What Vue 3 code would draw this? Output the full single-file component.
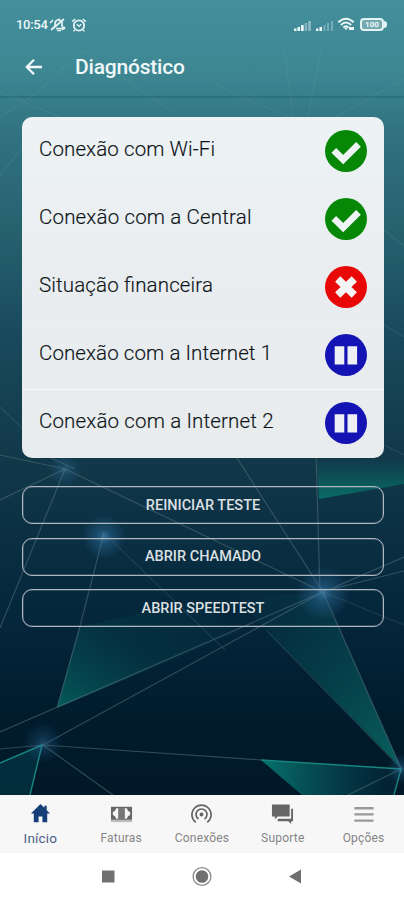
<script setup>
const checks = [
  { label: 'Conexão com Wi-Fi', status: 'ok', width: 176 },
  { label: 'Conexão com a Central', status: 'ok', width: 212.5 },
  { label: 'Situação financeira', status: 'fail', width: 174 },
  { label: 'Conexão com a Internet 1', status: 'wait', width: 233 },
  { label: 'Conexão com a Internet 2', status: 'wait', width: 234.5 },
]
const actions = ['REINICIAR TESTE', 'ABRIR CHAMADO', 'ABRIR SPEEDTEST']
const tabs = [
  { id: 'home', label: 'Início' },
  { id: 'bills', label: 'Faturas' },
  { id: 'links', label: 'Conexões' },
  { id: 'chat', label: 'Suporte' },
  { id: 'menu', label: 'Opções' },
]
</script>

<template>
  <div class="screen">
    <svg class="backdrop" viewBox="0 0 404 795" aria-hidden="true">
      <defs>
        <radialGradient id="glow">
          <stop offset="0" stop-color="#4b8fc0" stop-opacity=".65" />
          <stop offset=".35" stop-color="#2f6f9e" stop-opacity=".42" />
          <stop offset="1" stop-color="#2f6f9e" stop-opacity="0" />
        </radialGradient>
        <linearGradient id="tealA" x1="0" y1="1" x2="1" y2="0">
          <stop offset="0" stop-color="#066a66" stop-opacity=".8" />
          <stop offset=".5" stop-color="#06545a" stop-opacity=".25" />
          <stop offset="1" stop-color="#06545a" stop-opacity="0" />
        </linearGradient>
        <linearGradient id="tealB" x1="0" y1="0" x2=".8" y2="1">
          <stop offset="0" stop-color="#06545a" stop-opacity="0" />
          <stop offset="1" stop-color="#0a6a68" stop-opacity=".8" />
        </linearGradient>
        <linearGradient id="tealC" x1="0" y1="0" x2="1" y2="0">
          <stop offset="0" stop-color="#07736b" />
          <stop offset=".9" stop-color="#06465a" stop-opacity=".25" />
        </linearGradient>
        <linearGradient id="tealD" x1="0" y1="0" x2="0" y2="1">
          <stop offset="0" stop-color="#08776c" stop-opacity="0" />
          <stop offset="1" stop-color="#08776c" stop-opacity=".85" />
        </linearGradient>
      </defs>
      <path d="M79 627 57 708 240 631 200 600Z" fill="url(#tealA)" />
      <path d="M235 595 267 631 401 768 340 630 323 594Z" fill="url(#tealB)" />
      <path d="M317 462 404 458V484L319 499Z" fill="url(#tealD)" />
      <path d="M0 763 42 745 30 795H0Z" fill="#064454" opacity=".45" />
      <path d="M261 760 401 769 394 795H302Z" fill="url(#tealC)" />
      <g class="lines">
        <path d="M0 455 65 469 323 592 404 557M0 500 65 469 0 628M75 469 51 458M104 533 79 630 57 708M235 455 323 592 401 768M316 455 320 592 404 571M0 732 323 592M43 745 323 592M0 749 43 745 261 760M43 745 113 795M401 769 348 795" />
        <path class="dim" d="M323 592 404 625M104 533 225 650M267 631 401 769" />
        <path class="faint" d="M82 50 38 92 0 117M82 50 170 110M284 45 293 117M322 45 308 117M202 74 235 95 290 117M404 79 336 117M0 176 22 147M384 230 404 246M384 325 404 337M0 407 22 428M0 92 60 117M384 445 404 455" />
      </g>
      <path class="bright" d="M0 763 42 745 30 795M261 760 401 769 394 795" />
      <circle cx="65" cy="470" r="17" fill="url(#glow)" opacity=".6" />
      <circle cx="104" cy="537" r="22" fill="url(#glow)" />
      <circle cx="323" cy="593" r="27" fill="url(#glow)" />
      <circle cx="43" cy="743" r="20" fill="url(#glow)" opacity=".6" />
      <circle cx="402" cy="769" r="15" fill="url(#glow)" opacity=".7" />
    </svg>

    <header class="top">
      <div class="status">
        <span class="clock">10:54</span>
        <svg class="mute" viewBox="0 0 18 16">
          <g fill="none" stroke="#e4f2f4" stroke-width="1.7">
            <path d="M4 11.5 6 9V6Q7 2.5 10.5 3L13 5V9l2 2.5H7M8 13.5h4M10 1.5v2" />
            <path d="M2 13 15 2M1 6 4 3M13 13l3-3" />
          </g>
        </svg>
        <svg class="alarm" viewBox="0 0 16 16">
          <circle cx="8" cy="8.5" r="5.2" fill="none" stroke="#e4f2f4" stroke-width="1.8" />
          <path d="M1.2 4.6 4.2 2M14.800 4.600 11.800 2M5.700 7.300 8 9.300l2.300-2M3.700 13 2.600 14.400M12.300 13l1.100 1.400" fill="none" stroke="#e4f2f4" stroke-width="1.5" />
        </svg>
        <span class="grow"></span>
        <svg class="signal" viewBox="0 0 19 12">
          <path d="M1 8.500h2.500V11H1zM4.500 7H7v4H4.500zM8 5h2.700v6H8z" fill="#eef8f9" />
          <path d="M11.700 3H14v8h-2.300zM15 1h3v10h-3z" fill="#85b6bf" />
        </svg>
        <svg class="signal second" viewBox="0 0 19 12">
          <path d="M1 8.500h2.500V11H1zM4.500 7H7v4H4.500z" fill="#eef8f9" />
          <path d="M8.500 5h2v6h-2zM12 3h2v8h-2zM16 1h2v10h-2z" fill="#77acb6" />
        </svg>
        <svg class="wifi" viewBox="0 0 19 15">
          <g fill="none" stroke="#edf7f8" stroke-width="1.9">
            <path d="M1.3 5.2Q9 -1.8 16.7 5.2M3.8 8Q9 3.2 14.2 8M6.3 10.500Q9 8 11.700 10.500" />
          </g>
          <path d="M7.3 11.2 9 13l1.7-1.8Q9 10 7.3 11.2M12 10h5v3h-5z" fill="#edf7f8" />
        </svg>
        <span class="battery"><span class="cell">100</span><span class="tip"></span></span>
      </div>
      <div class="bar">
        <svg class="back" viewBox="0 0 18 18">
          <path d="M17 9H2M9 1.700 1.800 9 9 16.300" fill="none" stroke="#eff7f8" stroke-width="2.3" />
        </svg>
        <h1>Diagnóstico</h1>
      </div>
    </header>

    <main>
      <ul class="card">
        <li v-for="c in checks" :key="c.label">
          <svg class="label" :width="c.width + 2" height="30">
            <text x="0" y="20.500" :textLength="c.width" lengthAdjust="spacing">{{ c.label }}</text>
          </svg>
          <svg class="mark" viewBox="0 0 42 42">
            <circle cx="21" cy="21" r="21" :class="c.status" />
            <path v-if="c.status === 'ok'" d="M8.800 20.300 18.200 29.700 33.500 14.400" fill="none" stroke="#edf4f3" stroke-width="6.600" />
            <path v-else-if="c.status === 'fail'" d="M12.700 13 29.300 29M29.300 13 12.700 29" fill="none" stroke="#f4f4f4" stroke-width="7.500" />
            <path v-else d="M9.700 12.200h9.600v18.200H9.700zM22.500 12.200h9.600v18.200h-9.600z" fill="#edf1f5" />
          </svg>
        </li>
      </ul>
      <div class="actions">
        <button v-for="a in actions" :key="a">{{ a }}</button>
      </div>
    </main>

    <nav class="tabs">
      <a v-for="t in tabs" :key="t.id" :class="['tab', { active: t.id === 'home' }]">
        <svg viewBox="0 0 24 22">
          <path v-if="t.id === 'home'" d="M12 1 2 11h3v9h5v-6h4v6h5v-9h3L18.500 7.500V3H16v2z" fill="#173f77" />
          <g v-else-if="t.id === 'bills'">
            <path d="M1 17h22v3H1z" fill="#bbb" />
            <path d="M1 4h22v13.500H1z" fill="#666" />
            <path d="M6.500 5.500h11Q18.500 9 21 9.500v3Q18.500 13 17.500 16.500h-11Q5.500 13 3 12.500v-3Q5.500 9 6.500 5.500" fill="#f5f5f5" />
            <path d="M8.500 5h7v12h-7z" fill="#777" />
          </g>
          <g v-else-if="t.id === 'links'" fill="none" stroke="#666" stroke-width="1.700">
            <path d="M6 20.300A10 10 0 1 1 18 20.300M8.800 16.700A5.700 5.700 0 1 1 15.200 16.700" />
            <circle cx="12" cy="12" r="2" fill="#666" stroke="none" />
          </g>
          <g v-else-if="t.id === 'chat'" fill="#666">
            <path d="M1 1.500h18.500V14H7l-3 3v-3H1z" />
            <path d="M21 6h2v13h-2v3l-3-3H7v-2.500h14z" />
          </g>
          <path v-else d="M2.500 5.500h20M2.500 12h20M2.500 18.500h20" stroke="#999" stroke-width="2.400" />
        </svg>
        <span>{{ t.label }}</span>
      </a>
    </nav>
    <footer class="system">
      <svg viewBox="0 0 24 24"><path d="M6 5.500h12.500v12H6z" fill="#707070" /></svg>
      <svg viewBox="0 0 24 24">
        <circle cx="12" cy="11.500" r="8.900" fill="none" stroke="#888" stroke-width="1.300" />
        <circle cx="12" cy="11.500" r="6.300" fill="#707070" />
      </svg>
      <svg viewBox="0 0 24 24"><path d="M5 11.500 17 4.500v14z" fill="#707070" /></svg>
    </footer>
  </div>
</template>

<style>
body { margin: 0; }
</style>

<style scoped>
.screen {
  position: relative;
  width: 404px;
  height: 900px;
  display: flex;
  flex-direction: column;
  overflow: hidden;
  font-family: Roboto, sans-serif;
  background: linear-gradient(180deg, #438f9b 0, #3d8793 70px, #317381 130px, #27626f 225px, #194b5c 330px, #12394a 455px, #0b3044 530px, #04253a 630px, #011c2d 710px, #011827 795px);
}
.backdrop { position: absolute; left: 0; top: 0; width: 404px; height: 795px; }
.lines { fill: none; stroke: #547078; stroke-width: 1.2; opacity: .55; }
.dim { opacity: .5; }
.faint { stroke: #78aab0; opacity: .3; }
.bright { fill: none; stroke: #168681; stroke-width: 1.4; }
.top { position: relative; height: 98px; box-sizing: border-box; border-bottom: 2px solid rgba(22, 88, 102, .35); }
.status { display: flex; align-items: center; height: 49px; padding: 0 17px 0 16px; color: #edf7f8; }
.clock { width: 32px; font-size: 13px; font-weight: 500; letter-spacing: -.3px; }
.mute { width: 18px; height: 16px; margin-left: 1px; }
.alarm { width: 16px; height: 16px; margin-left: 4px; }
.grow { flex: 1; }
.signal { width: 19px; height: 12px; margin-top: 3px; }
.second { margin-left: 3px; }
.wifi { width: 19px; height: 15px; margin-left: 3px; }
.battery { display: flex; align-items: center; margin-left: 4px; }
.cell { box-sizing: border-box; width: 24px; height: 13px; border: 2px solid #e3f2f3; border-radius: 4px; background: #75aab1; font-size: 8px; line-height: 9px; font-weight: 700; text-align: center; }
.tip { width: 3px; height: 7px; background: #e3f2f3; border-radius: 0 3px 3px 0; }
.bar { display: flex; align-items: center; padding-left: 25px; height: 36px; }
.back { width: 18px; height: 18px; }
h1 { margin: 0 0 0 32px; font-size: 21px; line-height: 28px; font-weight: 500; color: #eff7f8; letter-spacing: -.2px; }
main { position: relative; height: 697px; padding: 19px 20px 0 22px; box-sizing: border-box; }
.card { margin: 0; padding: 0; list-style: none; height: 341px; border-radius: 10px; background: linear-gradient(#edf2f5, #e9edf0 50%, #e9eced); overflow: hidden; }
li { display: flex; justify-content: space-between; align-items: flex-start; box-sizing: border-box; height: 68.100px; padding: 13px 17px 0 17px; }
li + li { border-top: 1px solid rgba(255, 255, 255, .18); padding-top: 12px; }
li:last-child { border-top-color: #f6f8f8; }
.label { margin-top: 5px; font-size: 20.500px; font-weight: 300; fill: #0c1317; stroke: #0c1317; stroke-width: .15px; overflow: visible; }
.mark { width: 42px; height: 42px; flex: none; }
.ok { fill: #068806; }
.fail { fill: #e90808; }
.wait { fill: #1414b4; }
.actions { display: flex; flex-direction: column; gap: 13.500px; margin-top: 28px; }
button { height: 38px; padding: 0; border: 1px solid #b0b8c2; border-radius: 10px; background: transparent; box-shadow: inset 0 0 0 .5px rgba(176, 184, 194, .5); color: #dce0e3; font: 500 14.500px/35px Roboto, sans-serif; }
.tabs { position: relative; display: flex; height: 58px; padding-top: 7px; box-sizing: border-box; background: #f7f7f8; }
.tab { flex: 1; display: flex; flex-direction: column; align-items: center; color: #858585; font-size: 12px; letter-spacing: .2px; }
.tab svg { width: 23px; height: 23px; }
.tab span { line-height: 16px; margin-top: 5px; }
.active { color: #4a5f87; font-size: 13.500px; }
.system { position: relative; display: flex; align-items: center; justify-content: center; gap: 70px; height: 47px; background: #fff; }
.system svg { width: 24px; height: 24px; }
</style>
